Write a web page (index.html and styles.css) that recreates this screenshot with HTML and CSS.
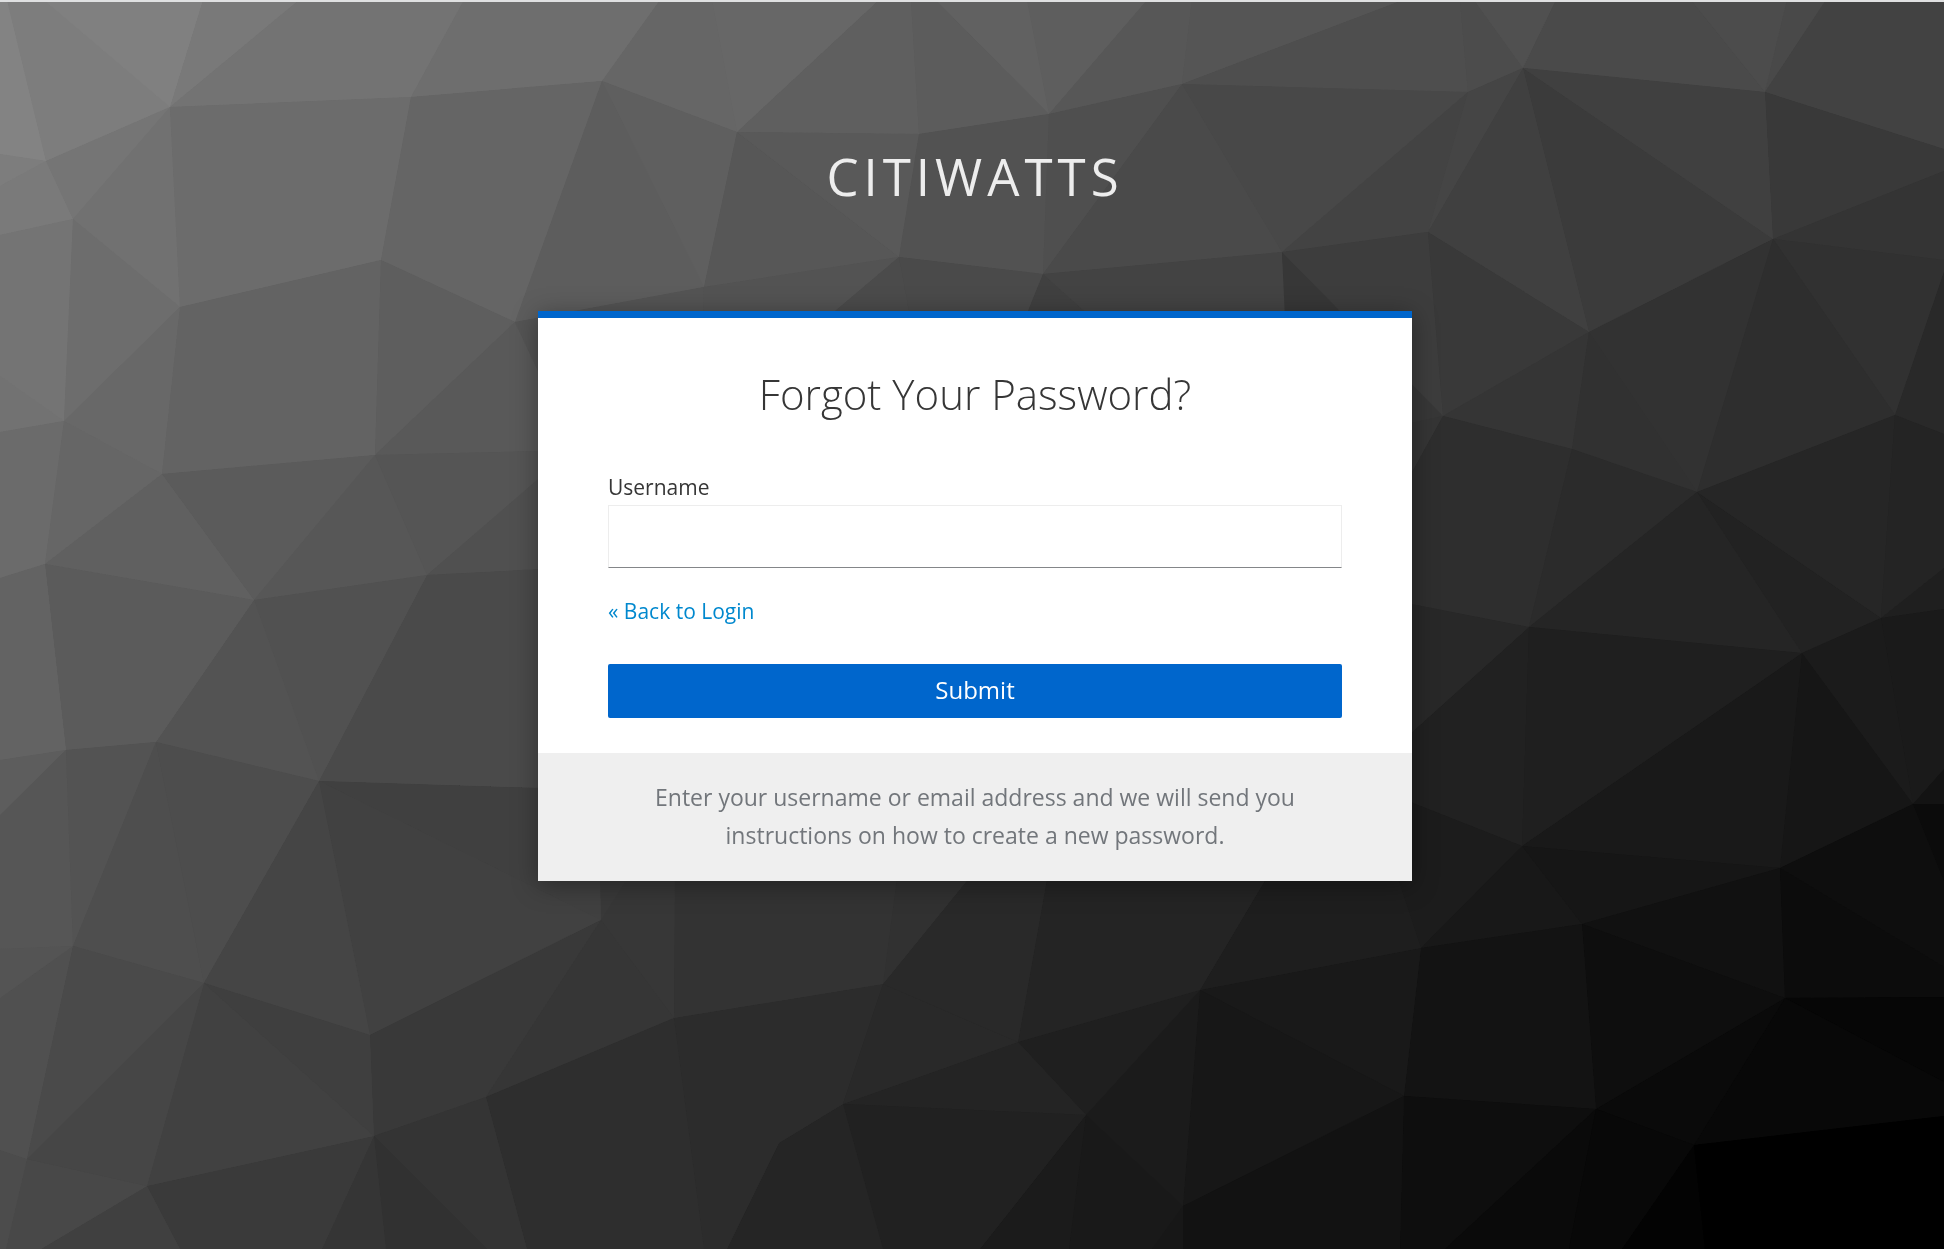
FILE: index.html
```html
<!DOCTYPE html>
<html lang="en">
<head>
<meta charset="utf-8">
<meta name="viewport" content="width=device-width, initial-scale=1">
<title>Forgot Your Password?</title>
<link rel="stylesheet" href="styles.css">
</head>
<body>
<svg class="backdrop" viewBox="0 0 1944 1249" preserveAspectRatio="xMidYMid slice" aria-hidden="true">
<!-- hard-edged copy below the smooth one, so no seams show between facets -->
<use class="backdrop-base" href="#facets"/>
<g id="facets">
<!-- top edge -->
<path fill="#838383" d="M0 0H7L46 161 0 154Z"/>
<path fill="#7d7d7d" d="M7 0H44L170 107 46 161Z"/>
<path fill="#808080" d="M44 0H203L170 107Z"/>
<path fill="#797979" d="M203 0H299L170 107Z"/>
<path fill="#737373" d="M299 0H464L411 97 170 107Z"/>
<path fill="#6e6e6e" d="M464 0H660L602 81 411 97Z"/>
<path fill="#666666" d="M660 0H712L737 132 602 81Z"/>
<path fill="#676767" d="M712 0H879L737 132Z"/>
<path fill="#5f5f5f" d="M879 0H911L919 134 737 132Z"/>
<path fill="#5c5c5c" d="M911 0H936L1049 114 919 134Z"/>
<path fill="#616161" d="M936 0H1027L1049 114Z"/>
<path fill="#5e5e5e" d="M1027 0H1147L1049 114Z"/>
<path fill="#575757" d="M1147 0H1192L1182 84 1049 114Z"/>
<path fill="#555555" d="M1192 0H1403L1182 84Z"/>
<path fill="#4e4e4e" d="M1403 0H1460L1468 92 1182 84Z"/>
<path fill="#4c4c4c" d="M1460 0H1474L1523 68 1468 92Z"/>
<path fill="#505050" d="M1474 0H1556L1523 68Z"/>
<path fill="#4a4a4a" d="M1556 0H1691L1765 92 1523 68Z"/>
<path fill="#4c4c4c" d="M1691 0H1787L1765 92Z"/>
<path fill="#494949" d="M1787 0H1826L1765 92Z"/>
<path fill="#424242" d="M1826 0H1944V149L1765 92Z"/>
<!-- upper band -->
<path fill="#7d7d7d" d="M0 154L46 161 0 186Z"/>
<path fill="#7a7a7a" d="M0 186L46 161 73 219 0 235Z"/>
<path fill="#757575" d="M46 161L170 107 73 219Z"/>
<path fill="#717171" d="M73 219L170 107 180 307Z"/>
<path fill="#6c6c6c" d="M170 107L411 97 381 260 180 307Z"/>
<path fill="#656565" d="M411 97L602 81 515 322 381 260Z"/>
<path fill="#5d5d5d" d="M602 81L704 287 515 322Z"/>
<path fill="#5f5f5f" d="M602 81L737 132 704 287Z"/>
<path fill="#575757" d="M737 132L899 257 704 287Z"/>
<path fill="#595959" d="M737 132L919 134 899 257Z"/>
<path fill="#525252" d="M919 134L1049 114 1043 274 899 257Z"/>
<path fill="#4f4f4f" d="M1049 114L1182 84 1043 274Z"/>
<path fill="#4a4a4a" d="M1182 84L1282 252 1043 274Z"/>
<path fill="#484848" d="M1182 84L1468 92 1282 252Z"/>
<path fill="#434343" d="M1468 92L1428 232 1282 252Z"/>
<path fill="#454545" d="M1468 92L1523 68 1428 232Z"/>
<path fill="#404040" d="M1523 68L1589 332 1428 232Z"/>
<path fill="#3b3b3b" d="M1523 68L1773 239 1589 332Z"/>
<path fill="#404040" d="M1523 68L1765 92 1773 239Z"/>
<path fill="#393939" d="M1765 92L1944 149V171L1773 239Z"/>
<path fill="#343434" d="M1773 239L1944 171V260Z"/>
<path fill="#313131" d="M1773 239L1944 260V272L1895 415Z"/>
<path fill="#292929" d="M1944 272V434L1895 415Z"/>
<!-- left side -->
<path fill="#747474" d="M0 235L73 219 64 421 0 376Z"/>
<path fill="#727272" d="M0 376L64 421 0 432Z"/>
<path fill="#6d6d6d" d="M73 219L180 307 64 421Z"/>
<path fill="#686868" d="M180 307L162 474 64 421Z"/>
<path fill="#636363" d="M180 307L381 260 375 455 162 474Z"/>
<path fill="#5e5e5e" d="M381 260L515 322 375 455Z"/>
<path fill="#595959" d="M515 322L575 450 375 455Z"/>
<path fill="#545454" d="M515 322L704 287 700 450H575Z"/>
<path fill="#535353" d="M704 287L899 257 700 425Z"/>
<path fill="#4b4b4b" d="M899 257L920 370 700 425Z"/>
<path fill="#4a4a4a" d="M899 257L1043 274 1004 370H920Z"/>
<path fill="#404040" d="M1043 274L1150 370H1004Z"/>
<path fill="#434343" d="M1043 274L1282 252 1290 370H1150Z"/>
<path fill="#373737" d="M1282 252L1443 416 1400 430H1290Z"/>
<path fill="#3d3d3d" d="M1282 252L1428 232 1443 416Z"/>
<path fill="#6b6b6b" d="M0 432L64 421 45 564 0 578Z"/>
<path fill="#666666" d="M64 421L162 474 45 564Z"/>
<path fill="#606060" d="M162 474L254 600 45 564Z"/>
<path fill="#5b5b5b" d="M162 474L375 455 254 600Z"/>
<path fill="#575757" d="M375 455L427 575 254 600Z"/>
<path fill="#555555" d="M375 455L575 450 427 575Z"/>
<path fill="#505050" d="M575 447L600 566 427 575Z"/>
<path fill="#4a4a4a" d="M427 575L600 566V790L319 781Z"/>
<path fill="#515151" d="M254 600L427 575 319 781Z"/>
<path fill="#535353" d="M254 600L319 781 156 742Z"/>
<path fill="#5b5b5b" d="M45 564L254 600 156 742 66 750Z"/>
<path fill="#636363" d="M0 578L45 564 66 750 0 760Z"/>
<path fill="#5d5d5d" d="M0 760L66 750 0 815Z"/>
<path fill="#565656" d="M0 815L66 750 73 946 0 949Z"/>
<path fill="#535353" d="M66 750L156 742 73 946Z"/>
<path fill="#4e4e4e" d="M156 742L204 983 73 946Z"/>
<path fill="#4d4d4d" d="M156 742L319 781 204 983Z"/>
<!-- right side -->
<path fill="#393939" d="M1428 232L1589 332 1443 416Z"/>
<path fill="#353535" d="M1589 332L1572 449 1443 416Z"/>
<path fill="#313131" d="M1589 332L1697 492 1572 449Z"/>
<path fill="#323232" d="M1589 332L1773 239 1697 492Z"/>
<path fill="#2e2e2e" d="M1773 239L1895 415 1697 492Z"/>
<path fill="#353535" d="M1443 416L1380 530V430Z"/>
<path fill="#2e2e2e" d="M1443 416L1572 449 1529 627 1380 598V530Z"/>
<path fill="#2b2b2b" d="M1572 449L1697 492 1529 627Z"/>
<path fill="#252525" d="M1697 492L1802 653 1529 627Z"/>
<path fill="#222222" d="M1697 492L1881 618 1802 653Z"/>
<path fill="#262626" d="M1697 492L1895 415 1881 618Z"/>
<path fill="#242424" d="M1895 415L1944 434V568L1881 618Z"/>
<path fill="#1f1f1f" d="M1881 618L1944 568V609Z"/>
<path fill="#1a1a1a" d="M1881 618L1944 609V769L1913 804Z"/>
<path fill="#1b1b1b" d="M1881 618L1913 804 1802 653Z"/>
<path fill="#161616" d="M1802 653L1913 804 1780 868Z"/>
<path fill="#191919" d="M1802 653L1780 868 1522 846Z"/>
<path fill="#1f1f1f" d="M1529 627L1802 653 1522 846Z"/>
<path fill="#212121" d="M1529 627L1522 846 1380 790V761Z"/>
<path fill="#282828" d="M1529 627L1380 761V598Z"/>
<path fill="#1c1c1c" d="M1522 846L1421 948 1380 830V790Z"/>
<path fill="#181818" d="M1522 846L1582 924 1421 948Z"/>
<path fill="#161616" d="M1522 846L1780 868 1582 924Z"/>
<path fill="#111111" d="M1780 868L1785 998 1582 924Z"/>
<path fill="#131313" d="M1913 804L1944 769V804Z"/>
<path fill="#0b0b0b" d="M1913 804H1944V881Z"/>
<path fill="#0e0e0e" d="M1913 804L1944 881V967L1780 868Z"/>
<path fill="#0c0c0c" d="M1780 868L1944 967V997L1785 998Z"/>
<path fill="#060606" d="M1785 998L1944 997V1082Z"/>
<path fill="#080808" d="M1785 998L1944 1082V1116L1694 1145Z"/>
<path fill="#0a0a0a" d="M1785 998L1694 1145 1596 1109Z"/>
<path fill="#0e0e0e" d="M1582 924L1785 998 1596 1109Z"/>
<path fill="#131313" d="M1421 948L1582 924 1596 1109 1404 1096Z"/>
<!-- bottom, right to left -->
<path fill="#191919" d="M1200 990L1421 948 1404 1096Z"/>
<path fill="#171717" d="M1200 990L1404 1096 1183 1206Z"/>
<path fill="#0e0e0e" d="M1404 1096L1596 1109 1445 1249H1400Z"/>
<path fill="#0a0a0a" d="M1596 1109L1569 1249H1445Z"/>
<path fill="#080808" d="M1596 1109L1694 1145 1622 1249H1569Z"/>
<path fill="#030303" d="M1694 1145L1705 1249H1622Z"/>
<path fill="#000000" d="M1694 1145L1944 1116V1249H1705Z"/>
<path fill="#121212" d="M1404 1096L1400 1249H1183V1206Z"/>
<path fill="#171717" d="M1183 1206V1249H1152Z"/>
<path fill="#191919" d="M1183 1206L1152 1249H1069L1086 1115Z"/>
<path fill="#1b1b1b" d="M1200 990L1183 1206 1086 1115Z"/>
<path fill="#1b1b1b" d="M1086 1115L1069 1249H980Z"/>
<path fill="#1f1f1f" d="M1018 1042L1200 990 1086 1115Z"/>
<path fill="#242424" d="M1018 1042L1086 1115 843 1104Z"/>
<path fill="#212121" d="M843 1104L1086 1115 980 1249H883Z"/>
<path fill="#252525" d="M843 1104L883 1249H727L779 1143Z"/>
<path fill="#2c2c2c" d="M674 1018L883 984 843 1104 779 1143 727 1249H704Z"/>
<path fill="#292929" d="M883 984L1018 1042 843 1104Z"/>
<path fill="#1e1e1e" d="M1200 990L1289 840H1385L1421 948Z"/>
<path fill="#242424" d="M1018 1042L1054 840H1289L1200 990Z"/>
<path fill="#292929" d="M883 984L1000 840H1054L1018 1042Z"/>
<path fill="#313131" d="M883 984L902 840H1000Z"/>
<path fill="#333333" d="M674 1018L675 840H902L883 984Z"/>
<path fill="#373737" d="M601 920L652 840H675L674 1018Z"/>
<path fill="#393939" d="M601 920L598 790H652V840Z"/>
<path fill="#404040" d="M319 781L598 790 601 920Z"/>
<path fill="#414141" d="M319 781L601 920 370 1035Z"/>
<path fill="#454545" d="M319 781L370 1035 204 983Z"/>
<path fill="#393939" d="M370 1035L601 920 486 1097 374 1136Z"/>
<path fill="#363636" d="M601 920L674 1018 486 1097Z"/>
<path fill="#2e2e2e" d="M486 1097L674 1018 704 1249H527Z"/>
<path fill="#343434" d="M374 1136L486 1097 527 1249H487Z"/>
<path fill="#313131" d="M374 1136L487 1249H386Z"/>
<path fill="#353535" d="M374 1136L386 1249H322Z"/>
<path fill="#3a3a3a" d="M374 1136L322 1249H180L147 1186Z"/>
<path fill="#414141" d="M204 983L374 1136 147 1186Z"/>
<path fill="#3f3f3f" d="M204 983L370 1035 374 1136Z"/>
<path fill="#404040" d="M147 1186L180 1249H41Z"/>
<path fill="#484848" d="M27 1159L147 1186 41 1249H6Z"/>
<path fill="#4c4c4c" d="M0 1150L27 1159 6 1249H0Z"/>
<path fill="#505050" d="M0 998L73 946 27 1159 0 1150Z"/>
<path fill="#4a4a4a" d="M73 946L204 983 27 1159Z"/>
<path fill="#464646" d="M204 983L147 1186 27 1159Z"/>
<path fill="#545454" d="M0 949L73 946 0 998Z"/>
</g>
</svg>
<div class="page">
  <header class="brand">CITIWATTS</header>
  <main class="card">
    <form class="card-body" action="#" method="post">
      <h1 class="title">Forgot Your Password?</h1>
      <label class="label" for="username">Username</label>
      <input class="field" type="text" id="username" name="username">
      <a class="back" href="#">« Back to Login</a>
      <button class="submit" type="submit">Submit</button>
    </form>
    <p class="help">Enter your username or email address and we will send you instructions on how to create a new password.</p>
  </main>
</div>
</body>
</html>
```
FILE: styles.css
```css
*,
*::before,
*::after {
  box-sizing: border-box;
}

body {
  margin: 0;
  min-height: 100vh;
  border-top: 2px solid #dfe0e1;
  background: #303030;
  color: #363636;
  font-family: "Open Sans", "Noto Sans", sans-serif;
}

.backdrop {
  position: fixed;
  inset: 0;
  z-index: -1;
  width: 100%;
  height: 100%;
}

.backdrop-base {
  shape-rendering: crispEdges;
}

.page {
  display: flex;
  flex-direction: column;
  align-items: center;
  padding: 140px 0 40px 6px;
}

.brand {
  margin-bottom: 101px;
  color: #ededed;
  font-size: 51px;
  line-height: 68px;
  letter-spacing: 5px;
}

.card {
  width: 874px;
  max-width: 100%;
  border-top: 7px solid #0066cc;
  background: #fff;
  box-shadow: 0 4px 24px rgba(0, 0, 0, 0.35);
}

.card-body {
  display: flex;
  flex-direction: column;
  padding: 49px 70px 35px;
}

.title {
  margin: 0 0 50px;
  font-size: 42px;
  font-weight: 300;
  line-height: 54px;
  text-align: center;
}

.label {
  margin-bottom: 2px;
  font-size: 21px;
  line-height: 32px;
}

.field {
  height: 63px;
  padding: 0 12px;
  border: 1px solid #ededed;
  border-bottom-color: #848689;
  border-radius: 0;
  background: #fff;
  color: inherit;
  font: inherit;
  font-size: 21px;
}

.back {
  align-self: flex-start;
  margin: 27px 0 37px;
  color: #0088ce;
  font-size: 21px;
  line-height: 32px;
  text-decoration: none;
}

.submit {
  height: 54px;
  padding: 0 0 4px;
  border: 0;
  border-radius: 2px;
  background: #0066cc;
  color: #fff;
  font: inherit;
  font-size: 24px;
}

.help {
  margin: 0;
  padding: 25px 70px 27px;
  background: #efefef;
  color: #72767b;
  font-size: 23px;
  line-height: 38px;
  text-align: center;
}
```
